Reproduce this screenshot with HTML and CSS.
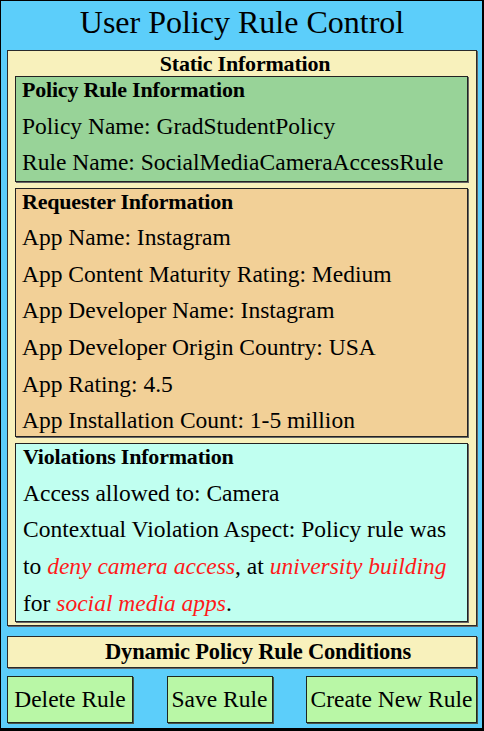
FILE: index.html
```html
<!DOCTYPE html>
<html lang="en">
<head>
<meta charset="utf-8">
<title>User Policy Rule Control</title>
<link rel="stylesheet" href="styles.css">
</head>
<body>
<div class="frame">
  <h1 class="title">User Policy Rule Control</h1>
  <section class="static">
    <h2 class="static-title">Static Information</h2>
    <div class="card card-policy">
      <h3 class="card-title">Policy Rule Information</h3>
      <p class="row">Policy Name: GradStudentPolicy</p>
      <p class="row">Rule Name: SocialMediaCameraAccessRule</p>
    </div>
    <div class="card card-requester">
      <h3 class="card-title">Requester Information</h3>
      <div class="rows">
        <p class="row">App Name: Instagram</p>
        <p class="row">App Content Maturity Rating: Medium</p>
        <p class="row">App Developer Name: Instagram</p>
        <p class="row">App Developer Origin Country: USA</p>
        <p class="row">App Rating: 4.5</p>
        <p class="row">App Installation Count: 1-5 million</p>
      </div>
    </div>
    <div class="card card-violations">
      <h3 class="card-title">Violations Information</h3>
      <p class="row">Access allowed to: Camera</p>
      <p class="row">Contextual Violation Aspect: Policy rule was to <em class="hl">deny camera access</em>, at <em class="hl">university building</em> for <em class="hl">social media apps</em>.</p>
    </div>
  </section>
  <div class="dynamic">Dynamic Policy Rule Conditions</div>
  <div class="actions">
    <button class="btn btn-delete">Delete Rule</button>
    <button class="btn btn-save">Save Rule</button>
    <button class="btn btn-create">Create New Rule</button>
  </div>
</div>
</body>
</html>
```
FILE: styles.css
```css
html, body {
  margin: 0;
  padding: 0;
  background: #000;
}

body {
  font-family: "Times New Roman", "Liberation Serif", Tinos, serif;
  color: #000;
}

.frame {
  box-sizing: border-box;
  width: 484px;
  height: 731px;
  background: #5ccefa;
  border-style: solid;
  border-color: #000;
  border-width: 1px 2px 3px 1px;
  padding: 0 5px 0 6px;
}

.title {
  margin: 0 0 7px 0;
  font-family: "Times New Roman", "Liberation Serif", Tinos, serif;
  font-size: 32px;
  font-weight: normal;
  line-height: 42px;
  text-align: center;
}

.static {
  background: #f8f1bc;
  border: 1px solid #2a2a2a;
  box-shadow: 1px 1px 0 #666;
  padding: 0 8px 3px 7px;
}

.static-title {
  margin: 0;
  font-family: "Times New Roman", "Liberation Serif", Tinos, serif;
  font-size: 22px;
  font-weight: bold;
  line-height: 25px;
  text-align: center;
  padding-left: 7px;
  letter-spacing: -0.2px;
}

.card {
  border: 1px solid #222;
  box-shadow: 1px 1px 0 #666;
  padding: 0 6px 0 6px;
}

.card + .card {
  margin-top: 6px;
}

.card-policy {
  background: #98d398;
}

.card-requester {
  background: #f2d097;
}

.card-violations {
  background: #c0fff0;
  padding-left: 7px;
}

.card-title {
  margin: 0;
  font-family: "Times New Roman", "Liberation Serif", Tinos, serif;
  font-size: 22px;
  font-weight: bold;
  line-height: 26px;
  padding-bottom: 4.8px;
  letter-spacing: -0.2px;
}

.card-requester .card-title {
  padding-bottom: 3.8px;
}

.card-requester .rows {
  margin-bottom: -3px;
}

.row {
  margin: 0;
  font-family: "Times New Roman", "Liberation Serif", Tinos, serif;
  font-size: 23.5px;
  line-height: 36.67px;
}

.hl {
  color: #ff1a1a;
  font-style: italic;
}

.dynamic {
  margin-top: 10px;
  background: #f8f1bc;
  border: 1px solid #2a2a2a;
  box-shadow: 1px 1px 0 #666;
  font-family: "Times New Roman", "Liberation Serif", Tinos, serif;
  font-size: 22.5px;
  font-weight: bold;
  line-height: 30px;
  text-align: center;
  padding-left: 32px;
  letter-spacing: -0.2px;
}

.actions {
  margin-top: 8px;
  display: flex;
  justify-content: space-between;
}

.btn {
  box-sizing: border-box;
  height: 47px;
  margin: 0;
  padding: 0;
  background: #b9f7a6;
  border: 1px solid #1e261e;
  box-shadow: 1px 1px 0 #4a564a;
  font-family: "Times New Roman", "Liberation Serif", Tinos, serif;
  font-size: 23.5px;
  color: #000;
  text-align: center;
  white-space: nowrap;
}

.btn-delete {
  width: 126px;
}

.btn-save {
  width: 106px;
}

.btn-create {
  width: 171px;
}
```
